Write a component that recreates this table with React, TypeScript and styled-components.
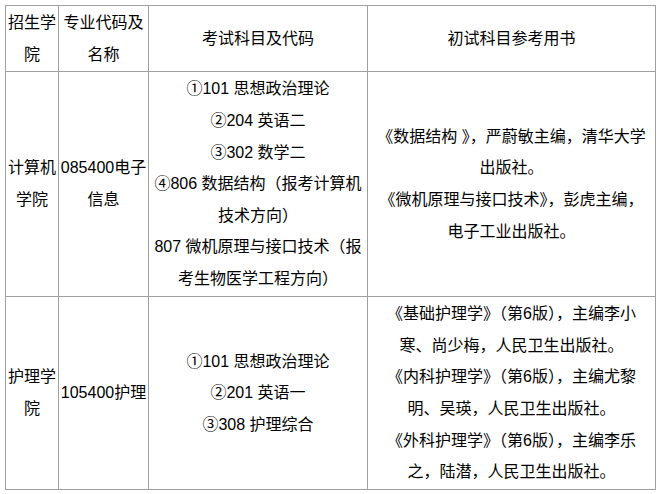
import React from "react";
import styled, { createGlobalStyle } from "styled-components";

const Global = createGlobalStyle`
  html, body { margin: 0; padding: 0; background: #ffffff; }
  body { font-family: "Liberation Sans", "Noto Sans CJK SC", sans-serif; }
`;

const Page = styled.div`
  padding: 5px 0 0 5px;
`;

const Table = styled.table`
  border-collapse: collapse;
  table-layout: fixed;
  width: 650px;
  font-family: "Liberation Sans", "Noto Sans CJK SC", sans-serif;
  font-size: 16px;
  color: #000;
`;

const Row = styled.tr<{ $h: number }>`
  height: ${(p) => p.$h}px;
`;

const Cell = styled.td`
  border: 1px solid #a0a0a0;
  padding: 0 1px;
  text-align: center;
  vertical-align: middle;
  line-height: 31.6px;
  white-space: nowrap;
  overflow: visible;
`;

const Line = styled.div`
  line-height: 31.6px;
`;

const Lines: React.FC<{ items: string[] }> = ({ items }) => (
  <>
    {items.map((t, i) => (
      <Line key={i}>{t}</Line>
    ))}
  </>
);

export default function App() {
  return (
    <Page>
      <Global />
      <Table>
        <colgroup>
          <col style={{ width: 53 }} />
          <col style={{ width: 90 }} />
          <col style={{ width: 219 }} />
          <col style={{ width: 288 }} />
        </colgroup>
        <tbody>
          <Row $h={66}>
            <Cell>
              <Lines items={["招生学", "院"]} />
            </Cell>
            <Cell>
              <Lines items={["专业代码及", "名称"]} />
            </Cell>
            <Cell>
              <Lines items={["考试科目及代码"]} />
            </Cell>
            <Cell>
              <Lines items={["初试科目参考用书"]} />
            </Cell>
          </Row>
          <Row $h={225}>
            <Cell>
              <Lines items={["计算机", "学院"]} />
            </Cell>
            <Cell>
              <Lines items={["085400电子", "信息"]} />
            </Cell>
            <Cell>
              <Lines
                items={[
                  "①101 思想政治理论",
                  "②204 英语二",
                  "③302 数学二",
                  "④806 数据结构（报考计算机",
                  "技术方向）",
                  "807 微机原理与接口技术（报",
                  "考生物医学工程方向）",
                ]}
              />
            </Cell>
            <Cell>
              <Lines
                items={[
                  "《数据结构 》，严蔚敏主编，清华大学",
                  "出版社。",
                  "《微机原理与接口技术》，彭虎主编，",
                  "电子工业出版社。",
                ]}
              />
            </Cell>
          </Row>
          <Row $h={193}>
            <Cell>
              <Lines items={["护理学", "院"]} />
            </Cell>
            <Cell>
              <Lines items={["105400护理"]} />
            </Cell>
            <Cell>
              <Lines items={["①101 思想政治理论", "②201 英语一", "③308 护理综合"]} />
            </Cell>
            <Cell>
              <Lines
                items={[
                  "《基础护理学》（第6版），主编李小",
                  "寒、尚少梅，人民卫生出版社。",
                  "《内科护理学》（第6版），主编尤黎",
                  "明、吴瑛，人民卫生出版社。",
                  "《外科护理学》（第6版），主编李乐",
                  "之，陆潜，人民卫生出版社。",
                ]}
              />
            </Cell>
          </Row>
        </tbody>
      </Table>
    </Page>
  );
}
